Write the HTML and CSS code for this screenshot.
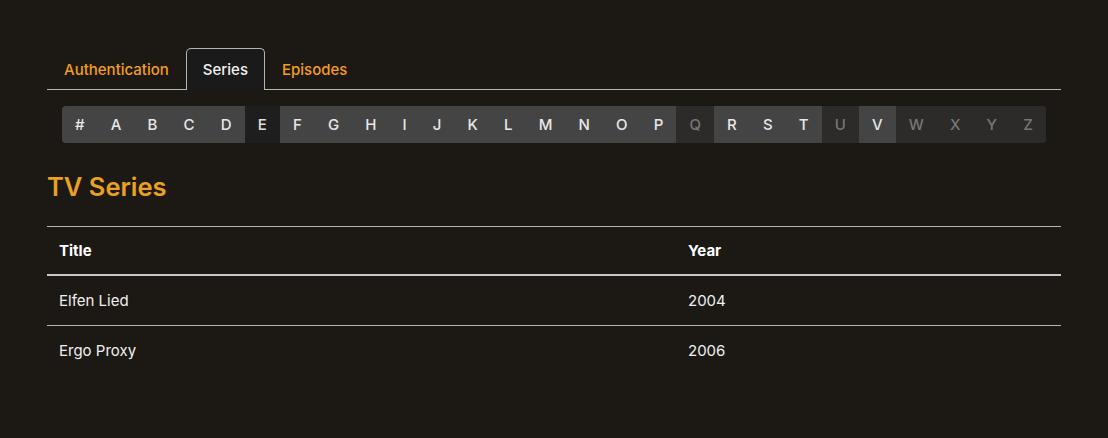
FILE: index.html
```html
<!DOCTYPE html>
<html>
<head>
<meta charset="utf-8">
<link rel="stylesheet" href="styles.css">
</head>
<body>
<div class="container">
  <ul class="tabs">
    <li class="tab">Authentication</li>
    <li class="tab active">Series</li>
    <li class="tab">Episodes</li>
  </ul>
  <div class="alpha">
    <span class="letter">#</span>
    <span class="letter">A</span>
    <span class="letter">B</span>
    <span class="letter">C</span>
    <span class="letter">D</span>
    <span class="letter current">E</span>
    <span class="letter">F</span>
    <span class="letter">G</span>
    <span class="letter">H</span>
    <span class="letter">I</span>
    <span class="letter">J</span>
    <span class="letter">K</span>
    <span class="letter">L</span>
    <span class="letter">M</span>
    <span class="letter">N</span>
    <span class="letter">O</span>
    <span class="letter">P</span>
    <span class="letter disabled">Q</span>
    <span class="letter">R</span>
    <span class="letter">S</span>
    <span class="letter">T</span>
    <span class="letter disabled">U</span>
    <span class="letter">V</span>
    <span class="letter disabled">W</span>
    <span class="letter disabled">X</span>
    <span class="letter disabled">Y</span>
    <span class="letter disabled">Z</span>
  </div>
  <h2 class="heading">TV Series</h2>
  <table class="series">
    <thead>
      <tr><th class="col-title">Title</th><th>Year</th></tr>
    </thead>
    <tbody>
      <tr><td>Elfen Lied</td><td>2004</td></tr>
      <tr><td>Ergo Proxy</td><td>2006</td></tr>
    </tbody>
  </table>
</div>
</body>
</html>
```
FILE: styles.css
```css
html, body {
  margin: 0;
  padding: 0;
  background: #1c1915;
  font-family: Inter, "Liberation Sans", sans-serif;
  color: #eeeeee;
}
.container {
  margin: 0 47px;
  padding-top: 48px;
}
.tabs {
  list-style: none;
  margin: 0;
  padding: 0;
  display: flex;
  border-bottom: 1px solid #b5b5b5;
}
.tab {
  padding: 0 16px;
  height: 40px;
  line-height: 41px;
  font-size: 15px;
  font-weight: 500;
  color: #f29d1f;
  border: 1px solid transparent;
  border-bottom: none;
  border-radius: 5px 5px 0 0;
  margin-bottom: -1px;
}
.tab.active {
  color: #f2f2f2;
  background: #1a1a1a;
  border-color: #b5b5b5;
  height: 41px;
}
.alpha {
  margin: 16px 15px 0;
  display: flex;
  background: #2d2b29;
  border-radius: 4px;
  overflow: hidden;
  height: 37px;
}
.letter {
  flex: 1 1 auto;
  text-align: center;
  padding: 0 10px;
  line-height: 37px;
  font-size: 15px;
  font-weight: 500;
  color: #e8e8e8;
  background: #444444;
}
.letter.current { background: #1e1e1e; color: #e0e0e0; }
.letter.disabled { background: #2d2b29; color: #777; }
.heading {
  margin: 28px 0 0;
  font-size: 25.5px;
  font-weight: 600;
  color: #e9a023;
  line-height: 32px;
}
.series {
  width: 100%;
  margin-top: 23px;
  border-collapse: collapse;
  font-size: 15px;
}
.series thead tr { border-top: 1px solid #b5b5b5; border-bottom: 2px solid #c8c8c8; }
.series tbody tr { border-bottom: 1px solid #b5b5b5; }
.series tbody tr:last-child { border-bottom: none; }
.series th {
  text-align: left;
  font-weight: 700;
  color: #ffffff;
  padding: 0 12px;
  height: 47px;
}
.series td {
  padding: 0 12px;
  height: 49px;
  color: #f0f0f0;
}
.col-title { width: 605px; }
```
